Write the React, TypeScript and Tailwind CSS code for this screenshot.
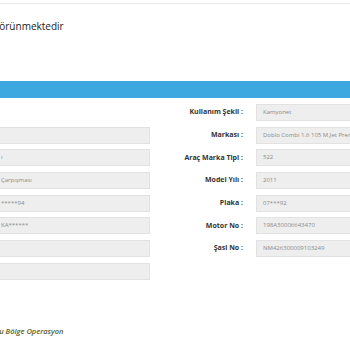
const leftRows = ["", "ı", "Çarpışması", "*****94", "KA******", "", ""];

const rightRows = [
  { label: "Kullanım Şekli :", value: "Kamyonet" },
  { label: "Markası :", value: "Doblo Combi 1.6 105 M.Jet Premio" },
  { label: "Araç Marka Tipi :", value: "522" },
  { label: "Model Yılı :", value: "2011" },
  { label: "Plaka :", value: "07***92" },
  { label: "Motor No :", value: "198A30006643470" },
  { label: "Şasi No :", value: "NM426300009103249" },
];

export default function App() {
  return (
    <div className="w-[350px] h-[350px] overflow-hidden bg-white font-['Open_Sans',sans-serif] text-[#333]">
      {/* top rule */}
      <div className="mt-[3px] border-t border-[#e8e8e8]" />

      {/* page title, cropped on the left */}
      <h2 className="-ml-[8px] mt-[16px] text-[10px] leading-[13px] text-[#222] whitespace-nowrap">Görünmektedir</h2>

      {/* section header */}
      <div className="mt-[48px] h-[17px] bg-[#3ca8df]" />

      {/* form */}
      <div className="mt-[6px] flex">
        <div className="w-[150px] shrink-0 flex flex-col gap-[5.67px] pt-[22.67px]">
          {leftRows.map((v, i) => (
            <div
              key={i}
              className="h-[17px] flex items-center bg-[#eeeeee] border border-l-0 border-[#e2e2e2] text-[6px] text-[#8a8a8a] pl-px whitespace-nowrap"
            >
              {v}
            </div>
          ))}
        </div>

        <div className="shrink-0 flex flex-col gap-[5.67px]">
          {rightRows.map((r) => (
            <div key={r.label} className="flex items-center h-[17px]">
              <div className="w-[93px] shrink-0 text-right text-[7px] font-bold text-[#333] whitespace-nowrap">{r.label}</div>
              <div className="ml-[13px] w-[150px] shrink-0 h-[17px] flex items-center bg-[#eeeeee] border border-[#e2e2e2] pl-[6px] text-[6px] text-[#8a8a8a] whitespace-nowrap overflow-hidden">
                {r.value}
              </div>
            </div>
          ))}
        </div>
      </div>

      {/* footer */}
      <p className="-ml-[13px] mt-[46px] text-[7.5px] italic font-semibold text-[#55602a] whitespace-nowrap">Kuzu Bölge Operasyon</p>
    </div>
  );
}
